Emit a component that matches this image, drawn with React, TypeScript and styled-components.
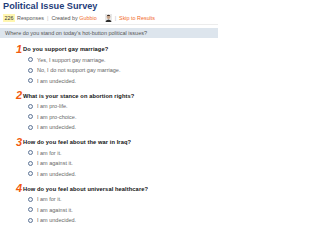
import React from "react";
import styled, { createGlobalStyle } from "styled-components";

const Global = createGlobalStyle`
  html, body { margin: 0; padding: 0; background: #fff; }
  body { font-family: "Liberation Sans", Arial, sans-serif; }
`;

const Page = styled.div`
  width: 218px;
  padding-top: 1px;
`;

const Title = styled.h1`
  margin: 0;
  padding-left: 3px;
  font-size: 9.2px;
  line-height: 11px;
  font-weight: bold;
  color: #1f3d7a;
`;

const Meta = styled.div`
  display: flex;
  align-items: center;
  height: 9px;
  margin-top: 1.5px;
  padding-left: 3px;
  font-size: 5.4px;
  color: #555;
`;

const Count = styled.span`
  background: #fff6b0;
  color: #333;
  padding: 1px 1.5px;
  margin-right: 2px;
`;

const Sep = styled.span`
  color: #bbb;
  margin: 0 3px;
`;

const Orange = styled.span`
  color: #f26a2a;
`;

const Avatar = styled.svg`
  width: 7px;
  height: 8px;
  margin-left: 8px;
  display: block;
`;

const Divider = styled.div`
  height: 1px;
  background: #ececec;
  margin-top: 1.5px;
`;

const Band = styled.div`
  margin-top: 3px;
  height: 10px;
  line-height: 10px;
  background: #dde5ed;
  padding-left: 5px;
  font-size: 5.5px;
  color: #555;
`;

const List = styled.div`
  padding-left: 16px;
  margin-top: 5.5px;
`;

const Question = styled.div`
  margin-bottom: 4px;
`;

const QHead = styled.div`
  display: flex;
  align-items: center;
  height: 11px;
`;

const Num = styled.span`
  width: 7px;
  font-size: 11px;
  font-weight: bold;
  font-style: italic;
  color: #f25a0e;
  line-height: 11px;
`;

const QText = styled.span`
  font-size: 5.7px;
  font-weight: bold;
  color: #111;
  letter-spacing: 0.1px;
`;

const Option = styled.div`
  display: flex;
  align-items: center;
  height: 10.5px;
  padding-left: 12px;
  font-size: 5.5px;
  color: #666;
`;

const Radio = styled.span`
  width: 3px;
  height: 3px;
  border: 1px solid #5f7596;
  border-radius: 50%;
  background: #f4f6f9;
  margin-right: 4px;
`;

const questions = [
  {
    q: "Do you support gay marriage?",
    opts: ["Yes, I support gay marriage.", "No, I do not support gay marriage.", "I am undecided."],
  },
  {
    q: "What is your stance on abortion rights?",
    opts: ["I am pro-life.", "I am pro-choice.", "I am undecided."],
  },
  {
    q: "How do you feel about the war in Iraq?",
    opts: ["I am for it.", "I am against it.", "I am undecided."],
  },
  {
    q: "How do you feel about universal healthcare?",
    opts: ["I am for it.", "I am against it.", "I am undecided."],
  },
];

export default function App() {
  return (
    <Page>
      <Global />
      <Title>Political Issue Survey</Title>
      <Meta>
        <Count>226</Count>
        Responses
        <Sep>|</Sep>
        Created by&nbsp;<Orange>Gubbio</Orange>
        <Avatar viewBox="0 0 7 8">
          <rect x="0" y="0" width="7" height="8" fill="#e8e8e8" />
          <ellipse cx="3.5" cy="3" rx="1.8" ry="2" fill="#c9a58a" />
          <path d="M1.6 2.6 Q1.8 0.8 3.5 0.8 Q5.2 0.8 5.4 2.6 L4.8 1.9 L2.2 1.9 Z" fill="#3a2a22" />
          <path d="M0.5 8 Q1 5.4 3.5 5.4 Q6 5.4 6.5 8 Z" fill="#2d2d2d" />
        </Avatar>
        <Sep>|</Sep>
        <Orange>Skip to Results</Orange>
      </Meta>
      <Divider />
      <Band>Where do you stand on today's hot-button political issues?</Band>
      <List>
        {questions.map((item, i) => (
          <Question key={i}>
            <QHead>
              <Num>{i + 1}</Num>
              <QText>{item.q}</QText>
            </QHead>
            {item.opts.map((o) => (
              <Option key={o}>
                <Radio />
                {o}
              </Option>
            ))}
          </Question>
        ))}
      </List>
    </Page>
  );
}
